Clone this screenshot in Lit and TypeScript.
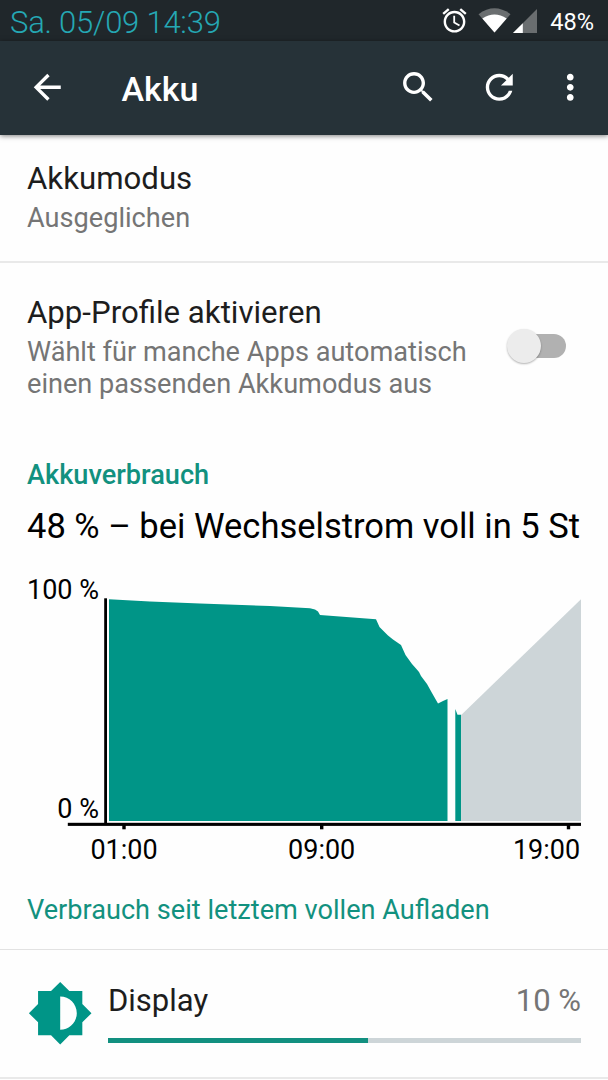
import { LitElement, html, css, svg } from "lit";
import { customElement, property } from "lit/decorators.js";

const ICONS = {
  back: "M20 11H7.83l5.59-5.59L12 4l-8 8 8 8 1.41-1.41L7.83 13H20v-2z",
  search:
    "M15.5 14h-.79l-.28-.27C15.41 12.59 16 11.11 16 9.5 16 5.91 13.09 3 9.5 3S3 5.91 3 9.5 5.91 16 9.5 16c1.61 0 3.09-.59 4.23-1.57l.27.28v.79l5 4.99L20.49 19l-4.99-5zm-6 0C7.01 14 5 11.99 5 9.5S7.01 5 9.5 5 14 7.01 14 9.5 11.99 14 9.5 14z",
  refresh:
    "M17.65 6.35C16.2 4.9 14.21 4 12 4c-4.42 0-7.99 3.58-7.99 8s3.57 8 7.99 8c3.73 0 6.84-2.55 7.73-6h-2.08c-.82 2.33-3.04 4-5.65 4-3.31 0-6-2.69-6-6s2.69-6 6-6c1.66 0 3.14.69 4.22 1.78L13 11h7V4l-2.35 2.35z",
  more: "M12 8c1.1 0 2-.9 2-2s-.9-2-2-2-2 .9-2 2 .9 2 2 2zm0 2c-1.1 0-2 .9-2 2s.9 2 2 2 2-.9 2-2-.9-2-2-2zm0 6c-1.1 0-2 .9-2 2s.9 2 2 2 2-.9 2-2-.9-2-2-2z",
  alarm:
    "M22 5.72l-4.6-3.86-1.29 1.53 4.6 3.86L22 5.72zM7.88 3.39L6.6 1.86 2 5.71l1.29 1.53 4.59-3.85zM12.5 8H11v6l4.75 2.85.75-1.23-4-2.37V8zM12 4c-4.97 0-9 4.03-9 9s4.02 9 9 9c4.97 0 9-4.03 9-9s-4.03-9-9-9zm0 16c-3.87 0-7-3.13-7-7s3.13-7 7-7 7 3.13 7 7-3.13 7-7 7z",
  brightness:
    "M20 15.31L23.31 12 20 8.69V4h-4.69L12 .69 8.69 4H4v4.69L.69 12 4 15.31V20h4.69L12 23.31 15.31 20H20v-4.69zM12 18V6c3.31 0 6 2.69 6 6s-2.69 6-6 6z",
};

@customElement("ui-icon")
class UiIcon extends LitElement {
  static styles = css`
    :host { display: block; width: 40.5px; height: 40.5px; flex: none; }
    .glyph { display: block; width: 100%; height: 100%; fill: currentColor; }
  `;
  @property() name: keyof typeof ICONS = "back";
  render() {
    return html`<svg class="glyph" viewBox="0 0 24 24"><path d=${ICONS[this.name]} /></svg>`;
  }
}

@customElement("status-bar")
class StatusBar extends LitElement {
  static styles = css`
    :host { display: flex; height: 41px; box-sizing: border-box; background: #20272b; color: #fff; padding: 0 14px 0 10px; align-items: flex-start; }
    .date { font-size: 31px; font-weight: 300; line-height: 36px; letter-spacing: -0.22px; color: #25a8b4; padding-top: 5px; flex: 1; white-space: nowrap; }
    .alarm { width: 29px; height: 29px; margin: 6px 8.5px 0 0; }
    .wifi { width: 33px; height: 25px; margin: 8px 2px 0 0; }
    .signal { width: 24px; height: 24px; margin: 8.5px 13.5px 0 0; }
    .percent { font-size: 23.6px; line-height: 28px; padding-top: 8px; }
  `;
  render() {
    return html`
      <span class="date">Sa. 05/09 14:39</span>
      <ui-icon class="alarm" name="alarm"></ui-icon>
      <svg class="wifi" viewBox="0 0 33 25">
        <path d="M0.5 6.2Q16.5 -5.6 32.5 6.2L16.5 24.5Z" fill="#6a6e70" />
        <path d="M4.3 10.6Q16.5 2.2 28.7 10.6L16.5 24.5Z" fill="#fff" />
      </svg>
      <svg class="signal" viewBox="0 0 24 24">
        <path d="M0 24L24 0V24Z" fill="#6a6e70" />
        <path d="M0 24L9.8 14.2V24Z" fill="#fff" />
      </svg>
      <span class="percent">48%</span>
    `;
  }
}

@customElement("app-bar")
class AppBar extends LitElement {
  static styles = css`
    :host { display: flex; align-items: center; height: 94px; box-sizing: border-box; padding: 0 17.5px 1px 27px; background: #263238; color: #fff; box-shadow: 0 1px 5px rgba(0, 0, 0, 0.5); z-index: 1; }
    .title { flex: 1; margin-left: 54px; padding-top: 2px; font-size: 34px; line-height: 40px; font-weight: 500; }
    .search { margin-right: 40.5px; }
    .refresh { margin-right: 30.5px; }
  `;
  render() {
    return html`
      <ui-icon name="back"></ui-icon>
      <span class="title">Akku</span>
      <ui-icon class="search" name="search"></ui-icon>
      <ui-icon class="refresh" name="refresh"></ui-icon>
      <ui-icon name="more"></ui-icon>
    `;
  }
}

@customElement("battery-chart")
class BatteryChart extends LitElement {
  static styles = css`
    :host { display: block; height: 300px; }
    .chart { display: block; width: 608px; height: 300px; }
    .label { font-size: 27px; fill: #000; }
    .end { text-anchor: end; }
    .mid { text-anchor: middle; }
    .axis { fill: #000; }
    .used { fill: #009587; }
    .forecast { fill: #cdd5d8; }
  `;
  ticks = [
    { x: 124, label: "01:00", at: 124 },
    { x: 321.7, label: "09:00", at: 321.7 },
    { x: 568.5, label: "19:00", at: 546.5 },
  ];
  render() {
    return html`
      <svg class="chart" viewBox="0 570 608 300">
        <text class="label end" x="99" y="598.5">100 %</text>
        <text class="label end" x="99" y="817.5">0 %</text>
        <path class="used" d="M109 599.2L150 601.5 200 603.5 270 606 310 608.3 315 609.5 318 611.5 320 615 376 619.3 379.5 627 388 635.5 393 639.5 401 645 405.5 655 412 664 416 668.5 419 672 421 676 427 684 432 693 438 703.5 443 701 447.5 699V821H109Z" />
        <path class="used" d="M455.3 709L457.5 714.7H461.2V821H455.3Z" />
        <path class="forecast" d="M461.2 715L581 599.3V821H461.2Z" />
        <rect class="axis" x="104.2" y="598.3" width="2.8" height="226" />
        <rect class="axis" x="67.8" y="822.8" width="513.2" height="3.1" />
        ${this.ticks.map(
          (t) => svg`
            <rect class="axis" x=${t.x - 1.7} y="825" width="3.4" height="4.3" />
            <text class="label mid" x=${t.at} y="859">${t.label}</text>`
        )}
      </svg>
    `;
  }
}

@customElement("app-root")
class AppRoot extends LitElement {
  static styles = css`
    :host { display: flex; flex-direction: column; width: 608px; height: 1080px; overflow: hidden; background: #fefefe; font-family: Roboto, "Noto Sans", sans-serif; color: #1d1d1d; white-space: nowrap; }
    .pref { display: flex; flex: none; box-sizing: border-box; padding: 0 27px; }
    .mode { height: 128px; padding-top: 26px; border-bottom: 2px solid #e9e9e9; }
    .profiles { height: 196px; padding-top: 32px; }
    .text { flex: 1; }
    .title { font-size: 31.2px; line-height: 36px; }
    .sub { font-size: 27.15px; line-height: 32px; margin-top: 5px; color: #757575; }
    .switch { display: flex; align-items: center; width: 59px; height: 34px; margin: 33.5px 15px 0 0; }
    .thumb { width: 34px; height: 34px; border-radius: 50%; background: #ececec; box-shadow: 0 1px 2px rgba(0, 0, 0, 0.3); z-index: 1; }
    .track { width: 42px; height: 24px; margin-left: -17px; border-radius: 12px; background: #b1b1b1; }
    .section { flex: none; padding-left: 27px; font-size: 27.15px; line-height: 32px; font-weight: 500; color: #12917f; }
    .summary { flex: none; padding-left: 27px; margin: 15px 0 24px; font-size: 34.5px; line-height: 40px; color: #000; }
    .since { flex: none; height: 55px; margin-top: 24px; padding-left: 27px; font-size: 27.15px; line-height: 32px; color: #12917f; border-bottom: 1px solid #e2e2e2; }
    .usage { display: flex; flex: none; height: 129px; box-sizing: border-box; padding: 0 27px; border-bottom: 2px solid #e9e9e9; }
    .usage-icon { width: 66.4px; height: 66.4px; margin: 30px 14.6px 0 0; color: #009587; }
    .usage-body { flex: 1; padding-top: 33px; }
    .usage-head { display: flex; justify-content: space-between; font-size: 31px; line-height: 36px; }
    .value { color: #757575; }
    .bar { height: 5px; margin-top: 19px; background: #cdd5d8; }
    .fill { height: 100%; background: #129080; }
  `;
  share = 55;
  render() {
    return html`
      <status-bar></status-bar>
      <app-bar></app-bar>
      <div class="pref mode">
        <div class="text">
          <div class="title">Akkumodus</div>
          <div class="sub">Ausgeglichen</div>
        </div>
      </div>
      <div class="pref profiles">
        <div class="text">
          <div class="title">App-Profile aktivieren</div>
          <div class="sub">Wählt für manche Apps automatisch<br />einen passenden Akkumodus aus</div>
        </div>
        <div class="switch"><div class="thumb"></div><div class="track"></div></div>
      </div>
      <div class="section">Akkuverbrauch</div>
      <div class="summary">48 % – bei Wechselstrom voll in 5 St</div>
      <battery-chart></battery-chart>
      <div class="since">Verbrauch seit letztem vollen Aufladen</div>
      <div class="usage">
        <ui-icon class="usage-icon" name="brightness"></ui-icon>
        <div class="usage-body">
          <div class="usage-head"><span>Display</span><span class="value">10 %</span></div>
          <div class="bar"><div class="fill" style="width:${this.share}%"></div></div>
        </div>
      </div>
    `;
  }
}
